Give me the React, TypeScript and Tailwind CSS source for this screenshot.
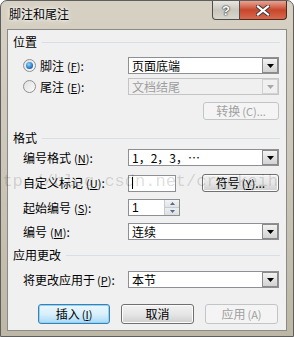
import React from 'react';

const cjk = { fontFamily: '"Noto Sans CJK SC", "Liberation Sans", sans-serif' };

const Key: React.FC<{ k: string }> = ({ k }) => (
  <span className="text-[11px]">
    (<span className="underline">{k}</span>)
  </span>
);

const DropArrow: React.FC<{ disabled?: boolean }> = ({ disabled }) => (
  <div
    className={`w-[16px] h-[15px] border flex items-center justify-center ${
      disabled
        ? 'border-[#d2d2d2] bg-[#f0f0f0]'
        : 'border-[#8a8a8a] bg-gradient-to-b from-[#f2f2f2] to-[#d3d3d3]'
    }`}
  >
    <svg width="7" height="4" viewBox="0 0 7 4">
      <path d="M0 0h7L3.5 4z" fill={disabled ? '#a8a8a8' : '#000'} />
    </svg>
  </div>
);

const Select: React.FC<{ value: string; disabled?: boolean; h?: string }> = ({ value, disabled }) => (
  <div
    className={`w-[151px] h-[17px] border flex items-center justify-between pl-[3px] pr-[0px] ${
      disabled ? 'border-[#c4c4c4] bg-[#f0f0f0] text-[#9e9e9e]' : 'border-[#8c8f94] bg-white text-black'
    }`}
  >
    <span className="leading-none">{value}</span>
    <DropArrow disabled={disabled} />
  </div>
);

const Btn: React.FC<{ children: React.ReactNode; w: string; disabled?: boolean; primary?: boolean }> = ({
  children,
  w,
  disabled,
  primary,
}) => (
  <div
    className={`${w} h-[18px] rounded-[3px] border flex items-center justify-center leading-none ${
      disabled
        ? 'border-[#c2c5c7] bg-[#f4f4f4] text-[#a0a0a0]'
        : primary
        ? 'border-[#3c7fb1] bg-gradient-to-b from-[#eaf6fd] via-[#d9f0fc] to-[#a7d9f5] text-black shadow-[inset_0_0_0_1px_#8fd3f5]'
        : 'border-[#707070] bg-gradient-to-b from-[#f2f2f2] via-[#e6e6e6] to-[#cfcfcf] text-black shadow-[inset_0_0_0_1px_#fcfcfc]'
    }`}
  >
    {children}
  </div>
);

const Heading: React.FC<{ text: string; mt: string }> = ({ text, mt }) => (
  <div className={`${mt} h-[14px] flex items-center pl-[5px] pr-[6px]`}>
    <span className="leading-none">{text}</span>
    <div className="flex-1 h-px bg-[#d5dfe5] ml-[5px]" />
  </div>
);

const Row: React.FC<{ mt: string; label: React.ReactNode; children: React.ReactNode }> = ({ mt, label, children }) => (
  <div className={`${mt} flex items-center pl-[15px]`}>
    <div className="w-[105px] flex items-center leading-none">{label}</div>
    {children}
  </div>
);

const Radio: React.FC<{ checked?: boolean }> = ({ checked }) => (
  <div className="w-[13px] h-[13px] rounded-full border border-[#8e8f8f] bg-gradient-to-br from-[#e0e0e0] to-[#fafafa] flex items-center justify-center">
    {checked && (
      <div className="w-[7px] h-[7px] rounded-full bg-[radial-gradient(circle_at_40%_35%,#8fd6ff,#1b67b8_70%)]" />
    )}
  </div>
);

export default function App() {
  return (
    <div
      className="relative w-[294px] h-[337px] overflow-hidden rounded-t-[7px] border border-[#5e5e5e] bg-gradient-to-b from-[#d6d1c3] via-[#cbc6b7] to-[#bdb7a6] text-[12px] text-black"
      style={cjk}
    >
      {/* title bar */}
      <div className="h-[28px] flex items-start">
        <div className="pl-[8px] pt-[7px] leading-none text-[12px] text-black [text-shadow:0_0_6px_#fff,0_0_3px_#fff]">
          脚注和尾注
        </div>
        <div className="ml-auto flex mr-[6px]">
          <div className="w-[28px] h-[19px] rounded-bl-[4px] border border-t-0 border-[#4d4d4d] bg-gradient-to-b from-[#e8e6e0] via-[#c9c6bd] to-[#d9d6cd] flex items-center justify-center text-white font-bold text-[13px] leading-none [text-shadow:0_0_1px_#000,0_0_2px_#222]" style={{ fontFamily: '"Liberation Sans", sans-serif' }}>
            ?
          </div>
          <div className="w-[47px] h-[19px] rounded-br-[4px] border border-l-0 border-t-0 border-[#4d2a22] bg-gradient-to-b from-[#e8a493] via-[#c7452b] to-[#d8694d] flex items-center justify-center">
            <svg width="14" height="11" viewBox="0 0 14 11">
              <path d="M2 1.5l10 8M12 1.5l-10 8" stroke="#3a3a3a" strokeWidth="4" strokeLinecap="square" />
              <path d="M2 1.5l10 8M12 1.5l-10 8" stroke="#fff" strokeWidth="2.2" strokeLinecap="square" />
            </svg>
          </div>
        </div>
      </div>

      {/* client area */}
      <div className="mx-[6px] h-[302px] border border-[#8a8a8a] bg-[#f0f0f0] flex flex-col">
        <Heading text="位置" mt="mt-[5px]" />

        <div className="mt-[8px] flex items-center pl-[15px]">
          <div className="w-[105px] flex items-center leading-none">
            <Radio checked />
            <span className="ml-[4px]">脚注 </span>
            <span className="ml-[3px]"><Key k="F" />:</span>
          </div>
          <Select value="页面底端" />
        </div>

        <div className="mt-[4px] flex items-center pl-[15px]">
          <div className="w-[105px] flex items-center leading-none">
            <Radio />
            <span className="ml-[4px]">尾注 </span>
            <span className="ml-[3px]"><Key k="E" />:</span>
          </div>
          <Select value="文档结尾" disabled />
        </div>

        <div className="mt-[7px] flex justify-end pr-[7px]">
          <Btn w="w-[76px]" disabled>
            转换 <span className="text-[11px] ml-[2px]">(C)...</span>
          </Btn>
        </div>

        <Heading text="格式" mt="mt-[11px]" />

        <Row mt="mt-[4px]" label={<>编号格式 <span className="ml-[3px]"><Key k="N" />:</span></>}>
          <Select value="1，2，3，…" />
        </Row>

        <Row mt="mt-[8px]" label={<>自定义标记 <span className="ml-[3px]"><Key k="U" />:</span></>}>
          <div className="w-[48px] h-[17px] border border-[#8c8f94] bg-white flex items-center pl-[3px]">
            <div className="w-px h-[12px] bg-black" />
          </div>
          <div className="ml-[26px]">
            <Btn w="w-[77px]">
              符号 <span className="ml-[2px]"><Key k="Y" />...</span>
            </Btn>
          </div>
        </Row>

        <Row mt="mt-[7px]" label={<>起始编号 <span className="ml-[3px]"><Key k="S" />:</span></>}>
          <div className="w-[52px] h-[17px] border border-[#8c8f94] bg-white flex items-center justify-between pl-[3px]">
            <span className="leading-none" style={{ fontFamily: '"Liberation Sans", sans-serif' }}>1</span>
            <div className="w-[15px] h-full flex flex-col border-l border-[#c6cbd1]">
              <div className="flex-1 bg-gradient-to-b from-[#f4f4f4] to-[#e2e2e2] border-b border-[#c6cbd1] flex items-center justify-center">
                <svg width="5" height="3" viewBox="0 0 5 3"><path d="M0 3h5L2.5 0z" fill="#4a6f96" /></svg>
              </div>
              <div className="flex-1 bg-gradient-to-b from-[#eeeeee] to-[#dedede] flex items-center justify-center">
                <svg width="5" height="3" viewBox="0 0 5 3"><path d="M0 0h5L2.5 3z" fill="#4a6f96" /></svg>
              </div>
            </div>
          </div>
        </Row>

        <Row mt="mt-[7px]" label={<>编号 <span className="ml-[3px]"><Key k="M" />:</span></>}>
          <Select value="连续" />
        </Row>

        <Heading text="应用更改" mt="mt-[8px]" />

        <Row mt="mt-[9px]" label={<>将更改应用于 <span className="ml-[2px]"><Key k="P" />:</span></>}>
          <Select value="本节" />
        </Row>

        <div className="mt-[16px] flex pl-[30px] gap-[11px]">
          <Btn w="w-[72px] !h-[20px]" primary>
            插入 <span className="ml-[2px]"><Key k="I" /></span>
          </Btn>
          <Btn w="w-[73px] !h-[20px]">取消</Btn>
          <Btn w="w-[73px] !h-[20px]" disabled>
            应用 <span className="ml-[2px] text-[11px]">(A)</span>
          </Btn>
        </div>
      </div>

      {/* watermark */}
      <div
        className="absolute left-[-19px] top-[171px] text-[17px] leading-[20px] text-black/15 whitespace-nowrap pointer-events-none"
        style={{ fontFamily: '"Liberation Mono", monospace' }}
      >
        http://blog.csdn.net/crackeih
      </div>
    </div>
  );
}
